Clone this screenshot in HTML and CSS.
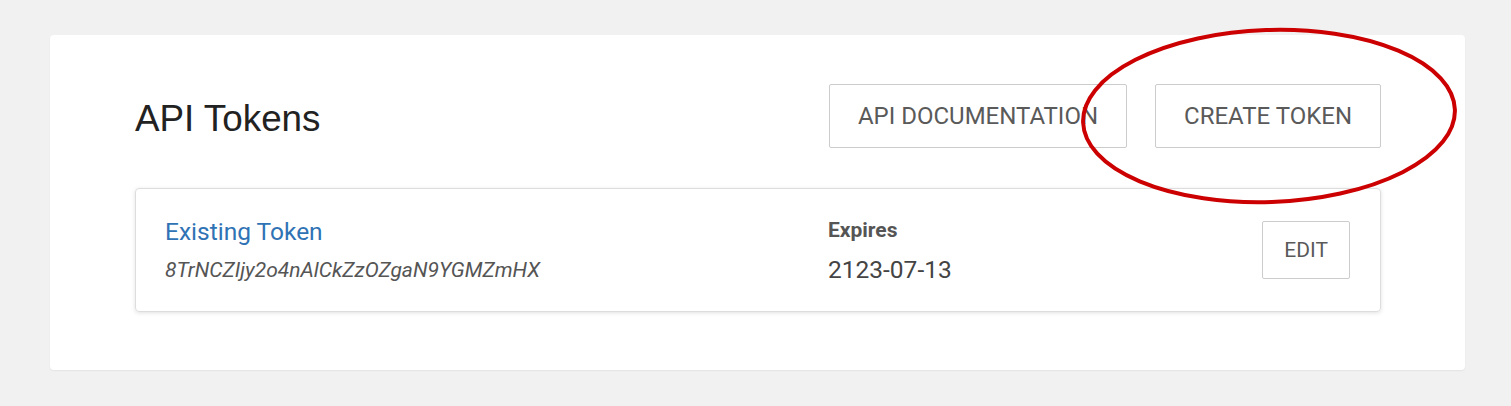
FILE: index.html
```html
<!DOCTYPE html>
<html lang="en">
<head>
<meta charset="utf-8">
<title>API Tokens</title>
<link rel="stylesheet" href="styles.css">
</head>
<body>
<main class="page">
  <section class="panel">
    <header class="panel-head">
      <h1 class="title">API Tokens</h1>
      <div class="actions">
        <button class="btn btn-lg">API Documentation</button>
        <button class="btn btn-lg">Create Token</button>
      </div>
    </header>
    <div class="token">
      <div class="token-main">
        <a class="token-name" href="#">Existing Token</a>
        <div class="token-value">8TrNCZIjy2o4nAlCkZzOZgaN9YGMZmHX</div>
      </div>
      <div class="token-exp">
        <div class="exp-label">Expires</div>
        <div class="exp-date">2123-07-13</div>
      </div>
      <button class="btn btn-sm">Edit</button>
    </div>
  </section>
  <svg class="annotation" width="420" height="200" viewBox="0 0 420 200" aria-hidden="true">
    <ellipse cx="210" cy="100" rx="186" ry="86" transform="rotate(-2 210 100)" fill="none" stroke="#cc0000" stroke-width="4"/>
  </svg>
</main>
</body>
</html>
```

FILE: styles.css
```css
html, body {
  margin: 0;
  padding: 0;
  background: #f1f1f1;
}

.page {
  position: relative;
  padding: 35px 46px 36px 50px;
  font-family: Roboto, "Liberation Sans", Arial, sans-serif;
}

.panel {
  width: 1415px;
  height: 335px;
  box-sizing: border-box;
  background: #ffffff;
  border-radius: 4px;
  box-shadow: 0 1px 2px rgba(0, 0, 0, 0.06);
  padding: 49px 84px 0 85px;
}

.panel-head {
  display: flex;
  align-items: center;
  justify-content: space-between;
  height: 64px;
}

.title {
  margin: 0;
  font-family: "Liberation Sans", Arial, sans-serif;
  font-weight: 400;
  font-size: 36.8px;
  color: #222222;
  padding-top: 6px;
}

.actions {
  display: flex;
  gap: 28px;
}

.btn {
  font-family: Roboto, "Liberation Sans", Arial, sans-serif;
  text-transform: uppercase;
  background: #ffffff;
  color: #5a5a5a;
  border: 1px solid #cccccc;
  border-radius: 2px;
  box-sizing: border-box;
  cursor: pointer;
}

.btn-lg {
  height: 64px;
  padding: 0 28px;
  font-size: 24px;
}

.btn-sm {
  height: 58px;
  padding: 0 21px;
  font-size: 21px;
}

.token {
  margin-top: 40px;
  height: 124px;
  box-sizing: border-box;
  border: 1px solid #dddddd;
  border-radius: 4px;
  box-shadow: 0 1px 4px rgba(0, 0, 0, 0.12);
  display: grid;
  grid-template-columns: 663px 1fr auto;
  align-items: center;
  padding: 0 30px 0 29px;
}

.token-main {
  display: flex;
  flex-direction: column;
  gap: 11px;
  padding-top: 1px;
}

.token-name {
  font-size: 24.5px;
  color: #2f73b5;
  text-decoration: none;
  line-height: 28px;
}

.token-value {
  font-size: 21px;
  font-style: italic;
  color: #555555;
  line-height: 26px;
}

.token-exp {
  display: flex;
  flex-direction: column;
  gap: 14px;
  padding-top: 2px;
}

.exp-label {
  font-size: 21px;
  font-weight: 700;
  color: #555555;
  line-height: 24px;
}

.exp-date {
  font-size: 24.5px;
  color: #444444;
  line-height: 28px;
}

.annotation {
  position: absolute;
  left: 1059px;
  top: 16px;
}
```
